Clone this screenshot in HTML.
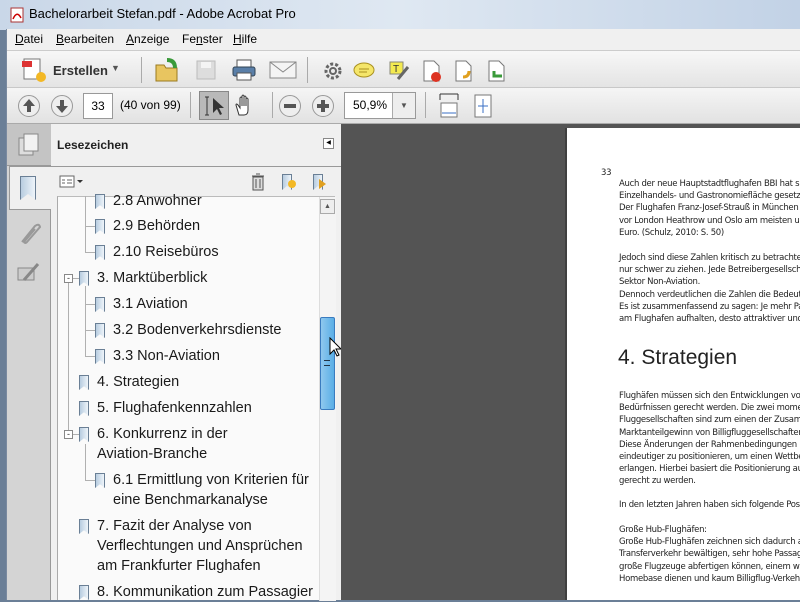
<!DOCTYPE html>
<html><head><meta charset="utf-8"><style>
*{margin:0;padding:0;box-sizing:border-box}
body{width:800px;height:600px;overflow:hidden;position:relative;font-family:"Liberation Sans",sans-serif;background:#6b7f97}
.abs{position:absolute}
#title{left:0;top:0;width:800px;height:30px;background:linear-gradient(90deg,#c9d7e8,#dfe8f2 50%,#c2d2e6);}
#title span{position:absolute;left:29px;top:6px;font-size:13px;color:#000}
#frame{left:6px;top:29px;width:794px;height:571px;background:#f0f0f0;border-left:1px solid #7a8aa0}
#menu{left:7px;top:29px;width:793px;height:20px;background:#f0f0f0;font-size:12px}
#menu span{position:absolute;top:3px}
#tb1{left:7px;top:50px;width:793px;height:38px;background:linear-gradient(#f7f7f7,#e4e4e4);border-top:1px solid #ccc;border-bottom:1px solid #c8c8c8}
#tb2{left:7px;top:88px;width:793px;height:36px;background:linear-gradient(#f5f5f5,#e2e2e2);border-bottom:1px solid #aaa}
.sep{position:absolute;width:1px;background:#aaa}
#tabs{left:7px;top:124px;width:44px;height:476px;background:#d4d4d4;border-right:1px solid #999}
#panel{left:51px;top:124px;width:290px;height:476px;background:#f0f0f0}
#list{left:57px;top:196px;width:278px;height:404px;background:#fafafa;border-left:1px solid #aaa;border-top:1px solid #bbb}
#doc{left:341px;top:124px;width:459px;height:476px;background:#545454}
#page{left:565px;top:128px;width:235px;height:472px;background:#fff;border-left:2px solid #404040}
.it{position:absolute;font-size:14.5px;color:#1a1a1a;line-height:20px;white-space:nowrap}
.bm{position:absolute;width:10px;height:15px;border:1px solid #6a7f95;background:linear-gradient(90deg,#b8cde0,#eef4fa);clip-path:polygon(0 0,100% 0,100% 100%,50% 75%,0 100%)}
.pt{position:absolute;font-size:8.5px;color:#222;line-height:12.2px;white-space:nowrap;font-family:"DejaVu Sans",sans-serif;letter-spacing:-0.3px}
.tl{position:absolute;border-left:1px solid #b0b0b0;}
.hl{position:absolute;border-top:1px solid #b0b0b0;height:0}
.box{position:absolute;width:9px;height:9px;border:1px solid #888;background:#fff;font-size:9px;line-height:6px;text-align:center;color:#333}
</style></head><body>
<div id="title" class="abs"><svg class="abs" style="left:9px;top:7px" width="16" height="16"><rect x="2" y="1" width="12" height="14" fill="#fff" stroke="#a33"/><path d="M4 12 Q8 3 12 11" stroke="#c00" fill="none" stroke-width="1.5"/></svg><span>Bachelorarbeit Stefan.pdf - Adobe Acrobat Pro</span></div>
<div id="frame" class="abs"></div>
<div id="menu" class="abs"><span style="left:8px"><u>D</u>atei</span><span style="left:49px"><u>B</u>earbeiten</span><span style="left:119px"><u>A</u>nzeige</span><span style="left:175px">Fe<u>n</u>ster</span><span style="left:226px"><u>H</u>ilfe</span></div>
<div id="tb1" class="abs">
<svg class="abs" style="left:14px;top:6px" width="28" height="26"><rect x="3" y="2" width="16" height="20" fill="#fff" stroke="#777"/><rect x="1" y="4" width="10" height="6" fill="#d33"/><circle cx="20" cy="20" r="5" fill="#f3b825"/></svg>
<span class="abs" style="left:46px;top:12px;font-size:13px;font-weight:bold;color:#333">Erstellen</span><span class="abs" style="left:104px;top:12px;font-size:9px;color:#555">▼</span>
<div class="sep" style="left:134px;top:6px;height:26px"></div>
<svg class="abs" style="left:146px;top:6px" width="28" height="26"><path d="M3 8h8l2 3h11v13H3z" fill="#e8c560" stroke="#9a7a20"/><path d="M14 3 q8 0 8 8" stroke="#3a9a3a" stroke-width="4" fill="none"/></svg>
<svg class="abs" style="left:188px;top:8px" width="22" height="22"><rect x="2" y="2" width="18" height="18" fill="#ddd" stroke="#bbb"/><rect x="6" y="3" width="10" height="6" fill="#f4f4f4"/></svg>
<svg class="abs" style="left:224px;top:7px" width="26" height="24"><rect x="6" y="2" width="14" height="8" fill="#fff" stroke="#555"/><rect x="2" y="9" width="22" height="9" rx="2" fill="#5a7fa8" stroke="#345"/><rect x="6" y="15" width="14" height="7" fill="#fff" stroke="#555"/></svg>
<svg class="abs" style="left:262px;top:10px" width="28" height="18"><rect x="1" y="1" width="26" height="16" fill="#f4f4f4" stroke="#888"/><path d="M1 1 14 11 27 1" stroke="#888" fill="none"/></svg>
<div class="sep" style="left:300px;top:6px;height:26px"></div>
<svg class="abs" style="left:316px;top:10px" width="20" height="20"><circle cx="10" cy="10" r="7" fill="none" stroke="#666" stroke-width="3" stroke-dasharray="3 2"/><circle cx="10" cy="10" r="3" fill="none" stroke="#666" stroke-width="2"/></svg>
<svg class="abs" style="left:345px;top:10px" width="24" height="20"><ellipse cx="12" cy="9" rx="10" ry="7" fill="#f5e66a" stroke="#a99020"/><path d="M7 8h10M7 11h8" stroke="#a99020"/></svg>
<svg class="abs" style="left:381px;top:9px" width="22" height="22"><rect x="2" y="2" width="13" height="12" fill="#f4ea50" stroke="#887"/><text x="5" y="12" font-size="10" fill="#333" font-family="Liberation Sans">T</text><path d="M10 19 L20 7" stroke="#666" stroke-width="3"/></svg>
<svg class="abs" style="left:414px;top:8px" width="22" height="24"><path d="M3 2h10l5 5v15H3z" fill="#fff" stroke="#777"/><circle cx="15" cy="18" r="5" fill="#d32"/></svg>
<svg class="abs" style="left:446px;top:8px" width="22" height="24"><path d="M3 2h10l5 5v15H3z" fill="#fff" stroke="#777"/><path d="M10 18 q6 0 6-6" stroke="#e0a020" stroke-width="3" fill="none"/></svg>
<svg class="abs" style="left:479px;top:8px" width="22" height="24"><path d="M3 2h10l5 5v15H3z" fill="#fff" stroke="#777"/><path d="M8 12 v5h8" stroke="#3a9a3a" stroke-width="3" fill="none"/></svg>
</div>
<div id="tb2" class="abs">
<svg class="abs" style="left:10px;top:6px" width="24" height="24"><circle cx="12" cy="12" r="10.5" fill="#eee" stroke="#999"/><path d="M12 5 6 12h4v6h4v-6h4z" fill="#555"/></svg>
<svg class="abs" style="left:43px;top:6px" width="24" height="24"><circle cx="12" cy="12" r="10.5" fill="#eee" stroke="#999"/><path d="M12 19 6 12h4V6h4v6h4z" fill="#555"/></svg>
<div class="abs" style="left:76px;top:5px;width:30px;height:26px;background:#fff;border:1px solid #999;font-size:12px;text-align:center;line-height:24px">33</div>
<span class="abs" style="left:113px;top:10px;font-size:12px">(40 von 99)</span>
<div class="sep" style="left:183px;top:4px;height:26px"></div>
<div class="abs" style="left:192px;top:3px;width:30px;height:29px;background:#b9b9b9;border:1px solid #888"></div>
<svg class="abs" style="left:195px;top:6px" width="26" height="24"><path d="M5 3v18M3 3h4M3 21h4" stroke="#333" fill="none"/><path d="M11 4v15l4-4 3 6 2-1-3-6h5z" fill="#333"/></svg>
<svg class="abs" style="left:226px;top:5px" width="24" height="26"><path d="M6 22 L3 12 q0-2 2 0 l2 3V5q1-2 2 0v8V3q1-2 2 0v10V4q1-2 2 0v9V6q1-2 2 0v11q0 5-4 5z" fill="#fff" stroke="#333"/></svg>
<div class="sep" style="left:265px;top:4px;height:26px"></div>
<svg class="abs" style="left:271px;top:6px" width="24" height="24"><circle cx="12" cy="12" r="10.5" fill="#eee" stroke="#999"/><rect x="6" y="10" width="12" height="4" fill="#555"/></svg>
<svg class="abs" style="left:304px;top:6px" width="24" height="24"><circle cx="12" cy="12" r="10.5" fill="#eee" stroke="#999"/><path d="M6 10h4V6h4v4h4v4h-4v4h-4v-4H6z" fill="#555"/></svg>
<div class="abs" style="left:337px;top:4px;width:72px;height:27px;background:#fff;border:1px solid #999;font-size:12px;line-height:25px;padding-left:8px">50,9%</div>
<div class="abs" style="left:385px;top:5px;width:23px;height:25px;background:#eee;border-left:1px solid #aaa;font-size:8px;text-align:center;line-height:25px;color:#555">▼</div>
<div class="sep" style="left:418px;top:4px;height:26px"></div>
<svg class="abs" style="left:432px;top:5px" width="20" height="26"><path d="M1 1h18M1 1v6M19 1v6" stroke="#333" fill="none"/><rect x="2" y="10" width="16" height="14" fill="#fff" stroke="#777"/><path d="M3 20h14" stroke="#3a6fc4"/></svg>
<svg class="abs" style="left:466px;top:5px" width="20" height="26"><rect x="2" y="2" width="16" height="22" fill="#fff" stroke="#777"/><path d="M10 6v14M5 13h10" stroke="#3a6fc4"/></svg>
</div>
<div id="tabs" class="abs">
<div class="abs" style="left:0;top:0;width:44px;height:42px;background:#c4c4c4;border-bottom:1px solid #999"></div>
<svg class="abs" style="left:10px;top:9px" width="24" height="24"><rect x="2" y="5" width="14" height="17" fill="#ddd" stroke="#888"/><rect x="7" y="1" width="14" height="17" fill="#f2f2f2" stroke="#888"/></svg>
<div class="abs" style="left:2px;top:42px;width:43px;height:44px;background:#f0f0f0;border:1px solid #999;border-right:none"></div>
<div class="bm" style="left:13px;top:52px;width:16px;height:24px"></div>
<svg class="abs" style="left:9px;top:96px" width="26" height="26"><path d="M6 22 L19 6 q4-3 5 1 L11 22 q-2 2-3 0 L19 9" stroke="#999" stroke-width="2" fill="none"/></svg>
<svg class="abs" style="left:9px;top:138px" width="26" height="22"><rect x="2" y="6" width="16" height="12" fill="#ccc" stroke="#888"/><path d="M8 18 L22 2" stroke="#888" stroke-width="3"/></svg>
</div>
<div id="panel" class="abs">
<span class="abs" style="left:6px;top:14px;font-size:12px;font-weight:bold;color:#222">Lesezeichen</span>
<div class="abs" style="left:272px;top:14px;width:11px;height:11px;border:1px solid #888;background:#fff;font-size:6px;line-height:9px;text-align:center">◀</div>
<div class="abs" style="left:0;top:42px;width:290px;height:1px;background:#999"></div>
<svg class="abs" style="left:8px;top:50px" width="26" height="16"><rect x="1" y="2" width="14" height="11" fill="#fff" stroke="#666"/><path d="M8 6h5M8 9h5M3 6h3M3 9h3" stroke="#666"/><path d="M18 6h6l-3 3z" fill="#333"/></svg>
<svg class="abs" style="left:199px;top:48px" width="16" height="20"><rect x="3" y="5" width="10" height="13" fill="#ddd" stroke="#555"/><path d="M2 4h12M6 2h4M6 7v9M10 7v9" stroke="#555"/></svg>
<div class="bm" style="left:231px;top:50px;width:10px;height:16px"></div><div class="abs" style="left:237px;top:56px;width:8px;height:8px;border-radius:50%;background:#f3b825"></div>
<div class="bm" style="left:262px;top:50px;width:10px;height:16px"></div><div class="abs" style="left:268px;top:55px;width:0;height:0;border:5px solid transparent;border-left:7px solid #e0a020"></div>
</div>
<div id="list" class="abs">
<div class="abs" style="left:261px;top:0;width:17px;height:404px;background:#f4f4f4;border-left:1px solid #ddd"></div>
<div class="abs" style="left:262px;top:2px;width:15px;height:15px;border:1px solid #aaa;background:#eee;font-size:7px;text-align:center;line-height:13px;color:#555">▲</div>
<div class="abs" style="left:262px;top:120px;width:15px;height:93px;border:1px solid #3a7bbf;border-radius:2px;background:linear-gradient(90deg,#8fc8ee,#5aaee6);"></div>
<div class="abs" style="left:266px;top:163px;width:6px;height:6px;border-top:1px solid #234;border-bottom:1px solid #234"></div>
</div>
<div class="tl" style="left:85px;top:196px;height:57px"></div>
<div class="hl" style="left:85px;top:226px;width:10px"></div><div class="hl" style="left:85px;top:252px;width:10px"></div>
<div class="tl" style="left:68px;top:283px;height:148px"></div>
<div class="tl" style="left:85px;top:286px;height:71px"></div>
<div class="hl" style="left:85px;top:304px;width:10px"></div><div class="hl" style="left:85px;top:330px;width:10px"></div><div class="hl" style="left:85px;top:356px;width:10px"></div>
<div class="hl" style="left:73px;top:434px;width:6px"></div><div class="hl" style="left:73px;top:278px;width:6px"></div>
<div class="tl" style="left:85px;top:444px;height:36px"></div><div class="hl" style="left:85px;top:480px;width:10px"></div>
<div class="bm" style="left:95px;top:194px"></div><div class="it" style="left:113px;top:191px">2.8 Anwohner</div>
<div class="bm" style="left:95px;top:219px"></div><div class="it" style="left:113px;top:216px">2.9 Behörden</div>
<div class="bm" style="left:95px;top:245px"></div><div class="it" style="left:113px;top:242px">2.10 Reisebüros</div>
<div class="box" style="left:64px;top:274px">-</div><div class="bm" style="left:79px;top:271px"></div><div class="it" style="left:97px;top:268px">3. Marktüberblick</div>
<div class="bm" style="left:95px;top:297px"></div><div class="it" style="left:113px;top:294px">3.1 Aviation</div>
<div class="bm" style="left:95px;top:323px"></div><div class="it" style="left:113px;top:320px">3.2 Bodenverkehrsdienste</div>
<div class="bm" style="left:95px;top:349px"></div><div class="it" style="left:113px;top:346px">3.3 Non-Aviation</div>
<div class="bm" style="left:79px;top:375px"></div><div class="it" style="left:97px;top:372px">4. Strategien</div>
<div class="bm" style="left:79px;top:401px"></div><div class="it" style="left:97px;top:398px">5. Flughafenkennzahlen</div>
<div class="box" style="left:64px;top:430px">-</div><div class="bm" style="left:79px;top:427px"></div><div class="it" style="left:97px;top:424px">6. Konkurrenz in der<br>Aviation-Branche</div>
<div class="bm" style="left:95px;top:473px"></div><div class="it" style="left:113px;top:470px">6.1 Ermittlung von Kriterien für<br>eine Benchmarkanalyse</div>
<div class="bm" style="left:79px;top:519px"></div><div class="it" style="left:97px;top:516px">7. Fazit der Analyse von<br>Verflechtungen und Ansprüchen<br>am Frankfurter Flughafen</div>
<div class="bm" style="left:79px;top:585px"></div><div class="it" style="left:97px;top:582px">8. Kommunikation zum Passagier</div>
<svg class="abs" style="left:329px;top:337px" width="14" height="22"><path d="M1 1v16l4-4 3 6 2-1-3-6h5z" fill="#fff" stroke="#000"/></svg>
<div class="abs" style="left:343px;top:398px;width:3px;height:55px;border-left:1px dotted #999;border-right:1px dotted #999"></div>
<div id="doc" class="abs"></div>
<div id="page" class="abs">
<div class="pt" style="left:34px;top:39px">33</div>
<div class="pt" style="left:52px;top:50px">Auch der neue Hauptstadtflughafen BBI hat sich<br>Einzelhandels- und Gastronomiefläche gesetzt.<br>Der Flughafen Franz-Josef-Strauß in München set<br>vor London Heathrow und Oslo am meisten um.<br>Euro. (Schulz, 2010: S. 50)</div>
<div class="pt" style="left:52px;top:124px">Jedoch sind diese Zahlen kritisch zu betrachten<br>nur schwer zu ziehen. Jede Betreibergesellschaf<br>Sektor Non-Aviation.<br>Dennoch verdeutlichen die Zahlen die Bedeutun<br>Es ist zusammenfassend zu sagen: Je mehr Passa<br>am Flughafen aufhalten, desto attraktiver und re</div>
<div class="pt" style="left:51px;top:217px;font-size:21px;line-height:26px;letter-spacing:0;font-family:'Liberation Sans',sans-serif">4. Strategien</div>
<div class="pt" style="left:52px;top:262px">Flughäfen müssen sich den Entwicklungen von F<br>Bedürfnissen gerecht werden. Die zwei moment<br>Fluggesellschaften sind zum einen der Zusamme<br>Marktanteilgewinn von Billigfluggesellschaften.<br>Diese Änderungen der Rahmenbedingungen (sie<br>eindeutiger zu positionieren, um einen Wettbew<br>erlangen. Hierbei basiert die Positionierung auf<br>gerecht zu werden.</div>
<div class="pt" style="left:52px;top:371px">In den letzten Jahren haben sich folgende Positio</div>
<div class="pt" style="left:52px;top:396px">Große Hub-Flughäfen:<br>Große Hub-Flughäfen zeichnen sich dadurch au<br>Transferverkehr bewältigen, sehr hohe Passagier<br>große Flugzeuge abfertigen können, einem welt<br>Homebase dienen und kaum Billigflug-Verkehr a</div>
</div>
</body></html>
